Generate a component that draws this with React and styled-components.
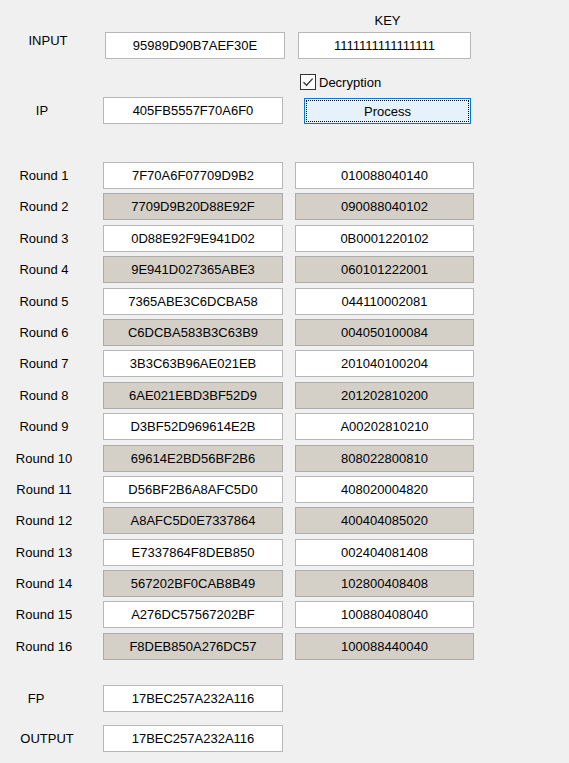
import React, { useState } from "react";
import styled, { createGlobalStyle } from "styled-components";

const GlobalStyle = createGlobalStyle`
  html, body {
    margin: 0;
    padding: 0;
    background: #f0f0f0;
  }
  body {
    font-family: "Liberation Sans", Arial, sans-serif;
    font-size: 13px;
    color: #000;
  }
`;

const rounds = [
  ["7F70A6F07709D9B2", "010088040140"],
  ["7709D9B20D88E92F", "090088040102"],
  ["0D88E92F9E941D02", "0B0001220102"],
  ["9E941D027365ABE3", "060101222001"],
  ["7365ABE3C6DCBA58", "044110002081"],
  ["C6DCBA583B3C63B9", "004050100084"],
  ["3B3C63B96AE021EB", "201040100204"],
  ["6AE021EBD3BF52D9", "201202810200"],
  ["D3BF52D969614E2B", "A00202810210"],
  ["69614E2BD56BF2B6", "808022800810"],
  ["D56BF2B6A8AFC5D0", "408020004820"],
  ["A8AFC5D0E7337864", "400404085020"],
  ["E7337864F8DEB850", "002404081408"],
  ["567202BF0CAB8B49", "102800408408"],
  ["A276DC57567202BF", "100880408040"],
  ["F8DEB850A276DC57", "100088440040"],
];

const Form = styled.div`
  width: 569px;
  height: 763px;
  box-sizing: border-box;
  padding-top: 13px;
  background: #f0f0f0;
  overflow: hidden;
`;

const Row = styled.div`
  display: flex;
  align-items: center;
  height: ${(p) => p.$h || 27}px;
  margin-top: ${(p) => p.$top || 0}px;
`;

// $shift moves the centred caption left or right of the column centre
const Label = styled.div`
  flex: none;
  width: 88px;
  box-sizing: border-box;
  text-align: center;
  line-height: 15px;
  padding-left: ${(p) => Math.max(0, (p.$shift || 0) * 2)}px;
  padding-right: ${(p) => Math.max(0, -(p.$shift || 0) * 2)}px;
  margin-top: ${(p) => p.$dy || 0}px;
  margin-right: ${(p) => p.$gap ?? 15}px;
  white-space: nowrap;
`;

const KeyTitle = styled.div`
  margin-left: 297px;
  width: 173px;
  text-align: center;
  padding-left: 8px;
  box-sizing: border-box;
  line-height: 15px;
`;

const Field = styled.div`
  flex: none;
  box-sizing: border-box;
  width: ${(p) => p.$w || 180}px;
  height: 27px;
  margin-left: ${(p) => p.$ml || 0}px;
  border: 1px solid ${(p) => (p.$shade ? "#ababab" : "#b7b7b7")};
  background: ${(p) => (p.$shade ? "#d4d0c8" : "#ffffff")};
  text-align: center;
  line-height: 25px;
  color: #000;
  white-space: nowrap;
`;

const CheckRow = styled.label`
  display: flex;
  align-items: center;
  gap: 3px;
  margin-left: 300px;
  cursor: default;
`;

const CheckBox = styled.span`
  box-sizing: border-box;
  width: 16px;
  height: 16px;
  border: 1px solid #333333;
  background: #ffffff;
  display: flex;
  align-items: center;
  justify-content: center;
`;

const ProcessButton = styled.button`
  box-sizing: border-box;
  width: 167px;
  height: 26px;
  margin-left: 21px;
  margin-top: 1px;
  border: 1px solid #0078d7;
  background: #e5f1fb;
  font-family: inherit;
  font-size: 13px;
  color: #000;
  padding: 0;
  outline: 1px dotted #000;
  outline-offset: -3px;
`;

const RoundGrid = styled.div`
  display: grid;
  grid-template-columns: 103px 192px 179px;
  grid-auto-rows: 27px;
  row-gap: 4.4px;
  align-items: center;
  margin-top: 38px;
`;

const RoundLabel = styled(Label)`
  margin-right: 0;
`;

export default function App() {
  const [decrypt, setDecrypt] = useState(true);

  return (
    <>
      <GlobalStyle />
      <Form>
        <KeyTitle>KEY</KeyTitle>
        <Row $top={4}>
          <Label $shift={4} $dy={-11} $gap={17}>INPUT</Label>
          <Field>95989D90B7AEF30E</Field>
          <Field $w={173} $ml={13}>1111111111111111</Field>
        </Row>
        <Row $h={16} $top={15}>
          <CheckRow onClick={() => setDecrypt(!decrypt)}>
            <CheckBox>
              {decrypt && (
                <svg width="12" height="12" viewBox="0 0 12 12">
                  <path d="M1.5 6.2 L4.6 9.2 L10.6 2.6" fill="none" stroke="#333" strokeWidth="1.3" />
                </svg>
              )}
            </CheckBox>
            <span>Decryption</span>
          </CheckRow>
        </Row>
        <Row $top={7}>
          <Label $shift={-2}>IP</Label>
          <Field>405FB5557F70A6F0</Field>
          <ProcessButton>Process</ProcessButton>
        </Row>

        <RoundGrid>
          {rounds.map(([data, key], i) => (
            <React.Fragment key={i}>
              <RoundLabel>Round {i + 1}</RoundLabel>
              <Field $shade={i % 2 === 1}>{data}</Field>
              <Field $w={179} $shade={i % 2 === 1}>{key}</Field>
            </React.Fragment>
          ))}
        </RoundGrid>

        <Row $top={25}>
          <Label $shift={-8}>FP</Label>
          <Field>17BEC257A232A116</Field>
        </Row>
        <Row $top={13}>
          <Label $shift={3}>OUTPUT</Label>
          <Field>17BEC257A232A116</Field>
        </Row>
      </Form>
    </>
  );
}
